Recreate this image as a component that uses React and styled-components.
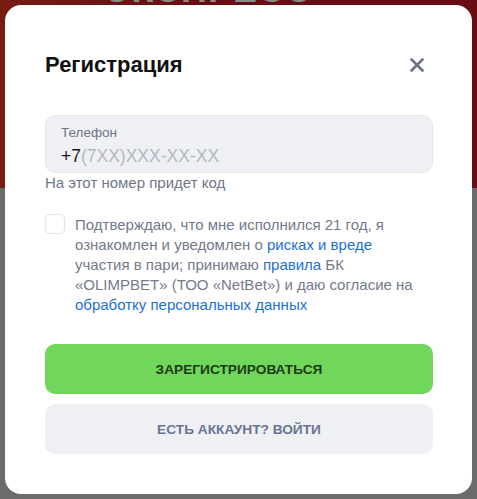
import React from "react";
import styled, { createGlobalStyle } from "styled-components";

const Global = createGlobalStyle`
  html, body { margin: 0; padding: 0; }
  body {
    font-family: "Liberation Sans", Arial, sans-serif;
    background: #6b6b6b;
    overflow: hidden;
  }
  * { box-sizing: border-box; }
`;

const Backdrop = styled.div`
  width: 477px;
  height: 499px;
  display: flex;
  flex-direction: column;
`;

const Banner = styled.div`
  height: 188px;
  background: linear-gradient(90deg, #761c10 0%, #6a0c14 40%, #6a0c14 100%);
  display: flex;
  justify-content: center;
  overflow: hidden;
`;

const BannerText = styled.div`
  font-family: "Liberation Sans", Arial, sans-serif;
  font-weight: 700;
  font-size: 36px;
  line-height: 36px;
  letter-spacing: 1px;
  color: #8a8a8a;
  margin-top: -28px;
  margin-left: -60px;
`;

const Dim = styled.div`
  flex: 1;
  background: #6b6b6b;
`;

const Modal = styled.div`
  position: fixed;
  left: 5px;
  top: 5px;
  width: 467px;
  height: 489px;
  background: #ffffff;
  border-radius: 16px;
  padding: 44px 39px 40px 40px;
  display: flex;
  flex-direction: column;
`;

const Header = styled.div`
  display: flex;
  align-items: center;
  justify-content: space-between;
  height: 32px;
`;

const Title = styled.h2`
  margin: 0;
  font-size: 22px;
  line-height: 26px;
  font-weight: 700;
  color: #111111;
`;

const CloseButton = styled.button`
  width: 32px;
  height: 32px;
  border: none;
  background: transparent;
  padding: 0;
  display: flex;
  align-items: center;
  justify-content: center;
  cursor: pointer;
`;

const Field = styled.div`
  margin-top: 34px;
  height: 59px;
  border: 1px solid #e5e6eb;
  background: #eff0f4;
  border-radius: 10px;
  padding: 8px 15px 0;
  display: flex;
  flex-direction: column;
  gap: 4px;
`;

const FieldLabel = styled.div`
  font-size: 13.5px;
  line-height: 17px;
  color: #6f7689;
`;

const FieldValue = styled.div`
  font-size: 17.5px;
  line-height: 22px;
  color: #1b1b1b;
`;

const Placeholder = styled.span`
  color: #b3b8c3;
`;

const Hint = styled.div`
  margin-top: 1px;
  font-size: 15px;
  line-height: 18px;
  color: #6f7689;
`;

const Consent = styled.label`
  margin-top: 22px;
  display: flex;
  gap: 10px;
  align-items: flex-start;
`;

const Box = styled.span`
  flex: none;
  width: 20px;
  height: 20px;
  border: 1px solid #e2e3e8;
  border-radius: 5px;
  background: #fff;
`;

const ConsentText = styled.p`
  margin: 0;
  padding-top: 1px;
  font-size: 15px;
  line-height: 20px;
  color: #737a8c;
`;

const Link = styled.a`
  color: #1d6fd6;
  text-decoration: none;
`;

const Actions = styled.div`
  margin-top: 29px;
  display: flex;
  flex-direction: column;
  gap: 10px;
`;

const Button = styled.button`
  height: 50px;
  width: 100%;
  border: none;
  border-radius: 10px;
  font-family: "Liberation Sans", Arial, sans-serif;
  font-size: 13.7px;
  font-weight: 700;
  text-transform: uppercase;
  background: ${(p) => (p.$primary ? "#70d75c" : "#eff0f4")};
  color: ${(p) => (p.$primary ? "#1f3a16" : "#6a7592")};
  cursor: pointer;
`;

export default function App() {
  return (
    <>
      <Global />
      <Backdrop>
        <Banner>
          <BannerText>ЭКСПРЕСС</BannerText>
        </Banner>
        <Dim />
      </Backdrop>
      <Modal>
        <Header>
          <Title>Регистрация</Title>
          <CloseButton aria-label="Закрыть">
            <svg width="14" height="14" viewBox="0 0 14 14">
              <path
                d="M1.5 1.5 L12.5 12.5 M12.5 1.5 L1.5 12.5"
                stroke="#6b7386"
                strokeWidth="2.6"
                strokeLinecap="round"
              />
            </svg>
          </CloseButton>
        </Header>
        <Field>
          <FieldLabel>Телефон</FieldLabel>
          <FieldValue>
            +7<Placeholder>(7XX)XXX-XX-XX</Placeholder>
          </FieldValue>
        </Field>
        <Hint>На этот номер придет код</Hint>
        <Consent>
          <Box />
          <ConsentText>
            Подтверждаю, что мне исполнился 21 год, я
            <br />
            ознакомлен и уведомлен о <Link href="#">рисках и вреде</Link>
            <br />
            участия в пари; принимаю <Link href="#">правила</Link> БК
            <br />
            «OLIMPBET» (ТОО «NetBet») и даю согласие на
            <br />
            <Link href="#">обработку персональных данных</Link>
          </ConsentText>
        </Consent>
        <Actions>
          <Button $primary>Зарегистрироваться</Button>
          <Button>Есть аккаунт? Войти</Button>
        </Actions>
      </Modal>
    </>
  );
}
